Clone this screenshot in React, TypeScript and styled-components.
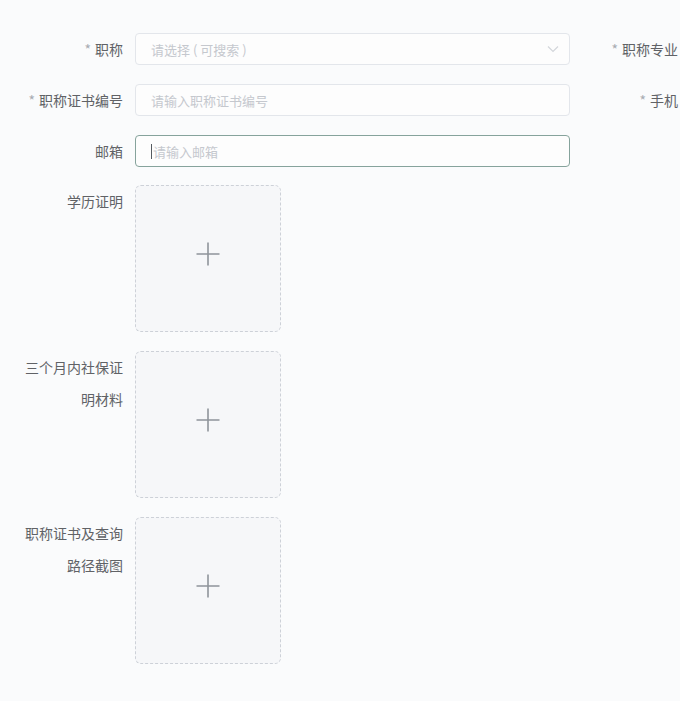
import React from "react";
import styled, { createGlobalStyle } from "styled-components";

const GlobalStyle = createGlobalStyle`
  html, body {
    margin: 0;
    padding: 0;
    background: #fafbfc;
    overflow: hidden;
  }
  body {
    width: 680px;
    height: 701px;
    font-family: "Noto Sans CJK SC", "Noto Sans", sans-serif;
  }
`;

const Page = styled.div`
  width: 680px;
  height: 701px;
  overflow: hidden;
  padding-top: 33px;
  box-sizing: border-box;
  display: flex;
  flex-direction: column;
  gap: 19px;
`;

const Row = styled.div<{ $tight?: boolean }>`
  display: flex;
  align-items: flex-start;
  white-space: nowrap;
  margin-bottom: ${(p) => (p.$tight ? "-1px" : "0")};
`;

const Item = styled.div<{ $width?: number }>`
  display: flex;
  align-items: flex-start;
  flex: none;
  width: ${(p) => (p.$width ? `${p.$width}px` : "auto")};
`;

const Label = styled.label<{ $width: number; $offset?: number }>`
  flex: none;
  width: ${(p) => p.$width}px;
  margin-left: ${(p) => p.$offset ?? 0}px;
  box-sizing: border-box;
  padding-right: 12px;
  text-align: right;
  font-size: 14px;
  line-height: 32px;
  color: #606266;
  white-space: normal;
`;

const Star = styled.span`
  color: #a8abb2;
  margin-right: 4px;
  font-size: 14px;
  line-height: 1;
  vertical-align: top;
  position: relative;
  top: 9px;
`;

const Field = styled.div<{ $focused?: boolean }>`
  position: relative;
  flex: none;
  width: 435px;
  height: 32px;
  box-sizing: border-box;
  border: 1px solid ${(p) => (p.$focused ? "#86a39c" : "#e3e6eb")};
  border-radius: 4px;
  background: #fdfdfd;
  display: flex;
  align-items: center;
  padding: 0 15px;
  font-size: 13px;
  color: #c5c8ce;
`;

const Caret = styled.span`
  display: inline-block;
  width: 1px;
  height: 15px;
  background: #555a60;
  margin-right: 1px;
`;

const Chevron = styled.svg`
  position: absolute;
  right: 10px;
  top: 50%;
  transform: translateY(-50%);
`;

const Upload = styled.div`
  flex: none;
  width: 146px;
  height: 147px;
  box-sizing: border-box;
  border: 1px dashed #cdd1d8;
  border-radius: 6px;
  background: #f6f7f9;
  display: flex;
  align-items: center;
  justify-content: center;
  padding-bottom: 10px;
`;

const PlusIcon = () => (
  <svg width="24" height="24" viewBox="0 0 24 24">
    <path d="M12 0.5v23M0.5 12h23" stroke="#8f949b" strokeWidth="1.6" fill="none" />
  </svg>
);

export default function App() {
  return (
    <>
      <GlobalStyle />
      <Page>
        <Row>
          <Item $width={570}>
            <Label $width={135}>
              <Star>*</Star>职称
            </Label>
            <Field>
              请选择 ( 可搜索 )
              <Chevron width="12" height="8" viewBox="0 0 12 8">
                <path d="M1 1.5l5 5 5-5" stroke="#d3d6db" strokeWidth="1.2" fill="none" />
              </Chevron>
            </Field>
          </Item>
          <Item>
            <Label $width={108} $offset={12}>
              <Star>*</Star>职称专业
            </Label>
          </Item>
        </Row>
        <Row>
          <Item $width={570}>
            <Label $width={135}>
              <Star>*</Star>职称证书编号
            </Label>
            <Field>请输入职称证书编号</Field>
          </Item>
          <Item>
            <Label $width={108} $offset={12}>
              <Star>*</Star>手机
            </Label>
          </Item>
        </Row>
        <Row $tight>
          <Item $width={570}>
            <Label $width={135}>邮箱</Label>
            <Field $focused>
              <Caret />
              请输入邮箱
            </Field>
          </Item>
        </Row>
        <Row>
          <Item>
            <Label $width={135}>学历证明</Label>
            <Upload>
              <PlusIcon />
            </Upload>
          </Item>
        </Row>
        <Row>
          <Item>
            <Label $width={135}>
              三个月内社保证
              <br />
              明材料
            </Label>
            <Upload>
              <PlusIcon />
            </Upload>
          </Item>
        </Row>
        <Row>
          <Item>
            <Label $width={135}>
              职称证书及查询
              <br />
              路径截图
            </Label>
            <Upload>
              <PlusIcon />
            </Upload>
          </Item>
        </Row>
      </Page>
    </>
  );
}
